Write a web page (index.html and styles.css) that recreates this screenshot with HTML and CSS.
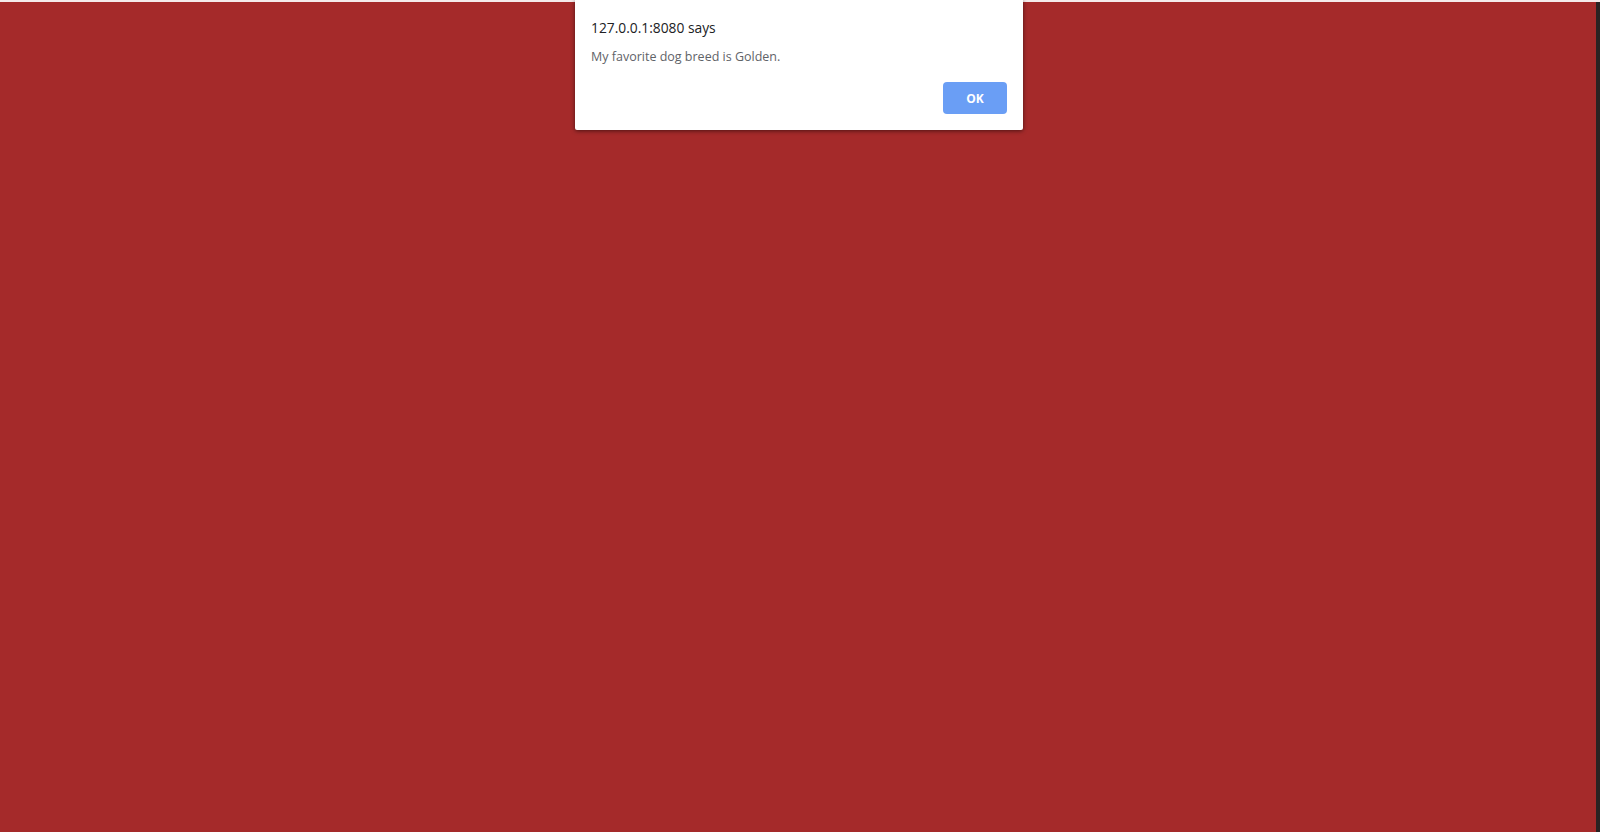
FILE: index.html
```html
<!DOCTYPE html>
<html>
<head>
<meta charset="utf-8">
<link rel="stylesheet" href="styles.css">
</head>
<body>
<div class="topline"></div>
<div class="main">
  <div class="page"></div>
  <div class="edge"></div>
</div>
<div class="dialog">
  <div class="title">127.0.0.1:8080 says</div>
  <div class="message">My favorite dog breed is Golden.</div>
  <div class="actions"><button class="ok">OK</button></div>
</div>
</body>
</html>
```
FILE: styles.css
```css
html, body {
  margin: 0;
  padding: 0;
  height: 100%;
  overflow: hidden;
}
body {
  display: flex;
  flex-direction: column;
  background: #ffffff;
  font-family: "Open Sans", "Noto Sans", sans-serif;
}
.topline {
  height: 2px;
  background: #f5eaea;
  flex: none;
}
.main {
  flex: 1;
  display: flex;
}
.page {
  flex: 1;
  background: #a52a2a;
}
.edge {
  width: 4px;
  background: #2a2222;
}
.dialog {
  position: absolute;
  left: 575px;
  top: 0;
  width: 448px;
  height: 130px;
  box-sizing: border-box;
  background: #ffffff;
  box-shadow: 0 1px 4px rgba(0, 0, 0, 0.55);
  border-radius: 0 0 2px 2px;
  padding: 18px 16px 0 16px;
}
.title {
  font-size: 13.8px;
  line-height: 20px;
  color: #202124;
}
.message {
  margin-top: 10px;
  font-size: 12.5px;
  line-height: 18px;
  color: #5f6368;
}
.actions {
  display: flex;
  justify-content: flex-end;
  margin-top: 16px;
}
.ok {
  width: 64px;
  height: 32px;
  border: none;
  border-radius: 4px;
  background: #6a9ef5;
  color: #ffffff;
  font-family: "Open Sans", "Noto Sans", sans-serif;
  font-weight: 700;
  font-size: 12px;
  padding: 0;
}
```
